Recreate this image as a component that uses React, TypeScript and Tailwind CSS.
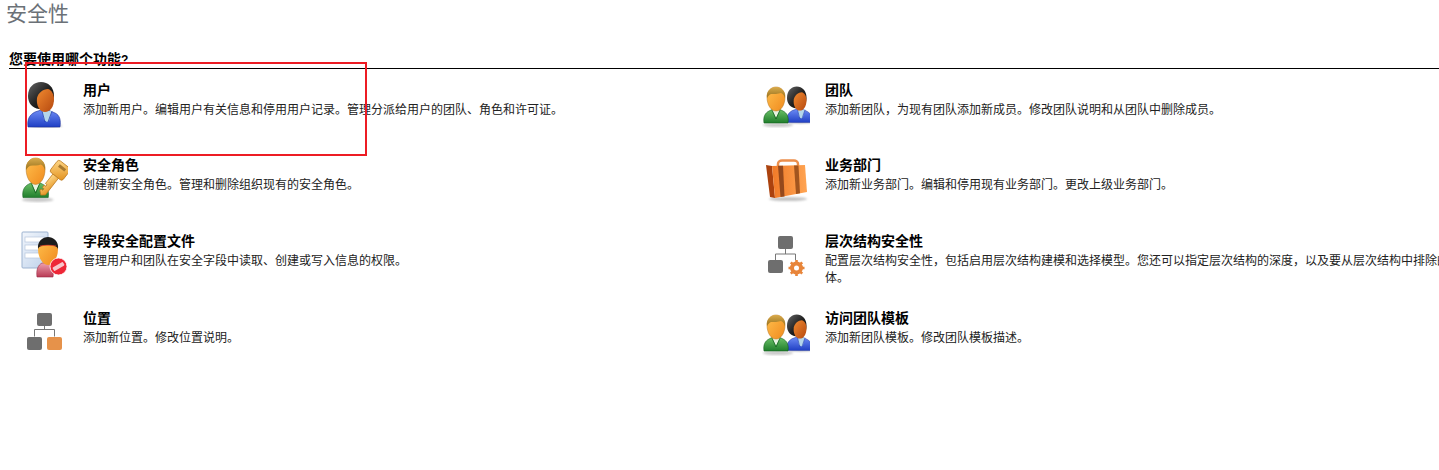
import type { ReactNode } from 'react'

const Defs = () => (
  <svg className="absolute w-0 h-0" aria-hidden="true">
    <defs>
      <linearGradient id="skinLight" x1="0" y1="0" x2="1" y2="1">
        <stop offset="0" stopColor="#ffc04d" />
        <stop offset="1" stopColor="#f08a1e" />
      </linearGradient>
      <linearGradient id="skinDark" x1="0" y1="0" x2="1" y2="1">
        <stop offset="0" stopColor="#f08a30" />
        <stop offset="1" stopColor="#b5480f" />
      </linearGradient>
      <linearGradient id="hairBlond" x1="0" y1="0" x2="0" y2="1">
        <stop offset="0" stopColor="#d9ab4c" />
        <stop offset="1" stopColor="#96701c" />
      </linearGradient>
      <linearGradient id="hairBlack" x1="0" y1="0" x2="1" y2="1">
        <stop offset="0" stopColor="#666" />
        <stop offset="0.5" stopColor="#222" />
        <stop offset="1" stopColor="#000" />
      </linearGradient>
      <linearGradient id="bodyGreen" x1="0" y1="0" x2="0" y2="1">
        <stop offset="0" stopColor="#6fc46a" />
        <stop offset="1" stopColor="#1f7d2b" />
      </linearGradient>
      <linearGradient id="bodyBlue" x1="0" y1="0" x2="0" y2="1">
        <stop offset="0" stopColor="#6d8cf5" />
        <stop offset="1" stopColor="#1f3fc4" />
      </linearGradient>
      <linearGradient id="bodyPink" x1="0" y1="0" x2="0" y2="1">
        <stop offset="0" stopColor="#eda0ad" />
        <stop offset="1" stopColor="#b93a55" />
      </linearGradient>
      <linearGradient id="keyGold" x1="0" y1="0" x2="1" y2="1">
        <stop offset="0" stopColor="#ffd98a" />
        <stop offset="1" stopColor="#e2901c" />
      </linearGradient>
      <linearGradient id="caseFront" x1="0" y1="0" x2="1" y2="0">
        <stop offset="0" stopColor="#f07a28" />
        <stop offset="1" stopColor="#ffa452" />
      </linearGradient>
      <linearGradient id="pageBlue" x1="0" y1="0" x2="1" y2="1">
        <stop offset="0" stopColor="#f2f6fc" />
        <stop offset="1" stopColor="#bcd0ea" />
      </linearGradient>
      <filter id="soft" x="-30%" y="-30%" width="160%" height="160%">
        <feGaussianBlur stdDeviation="1.2" />
      </filter>
    </defs>
  </svg>
)

const Icon = ({ children }: { children: ReactNode }) => (
  <svg width="48" height="48" viewBox="0 0 48 48" className="shrink-0">
    {children}
  </svg>
)

// woman with black hair and blue jacket, drawn in the 48 box of the user icon
const Woman = () => (
  <g>
    <ellipse cx="26" cy="46" rx="16" ry="2" fill="#777" opacity="0.45" filter="url(#soft)" />
    <path d="M8 47c-1-7 1-12 7-15l6-2h7l7 3c5 2 6 8 5 14z" fill="url(#bodyBlue)" stroke="#1b2f9a" strokeWidth="0.6" />
    <path d="M22 31h10l-3 10-2 1-3-2z" fill="#b4d6ea" />
    <path d="M22 31l3 11M32 31l-4 11" stroke="#2340b0" strokeWidth="0.8" fill="none" />
    <path d="M8 16C8 7 14 2 21 2s13 5 13 14c0 7-3 12-7 14l-8-1C12 28 8 23 8 16z" fill="url(#hairBlack)" />
    <path d="M17 18c1-5 6-9 11-9 4 1 6 6 6 10 0 8-4 13-9 13-5 0-9-6-8-14z" fill="url(#skinDark)" />
  </g>
)

// man with blond hair and green shirt, head 18 wide and body 24 wide
const Man = () => (
  <g>
    <ellipse cx="14" cy="38" rx="15" ry="2" fill="#777" opacity="0.4" filter="url(#soft)" />
    <path d="M0 36c-1-6 1-10 5-12l4-2h6l4 2c4 2 6 6 5 12z" fill="url(#bodyGreen)" stroke="#156320" strokeWidth="0.6" />
    <path d="M8 23h8l-4 8z" fill="#e8f3e2" />
    <path d="M8 23l4 9 4-9" stroke="#156320" strokeWidth="0.8" fill="none" />
    <path d="M3 10C3 4 7 0 12 0s9 4 9 10c0 8-4 14-9 14S3 18 3 10z" fill="url(#skinLight)" stroke="#b5741c" strokeWidth="0.5" />
    <path d="M3 11C2 4 7 0 12 0s10 4 9 11c-1-3-2-4-4-5-3 1-7 1-10 1-2 1-3 2-4 4z" fill="url(#hairBlond)" />
  </g>
)

const UserIcon = () => (
  <Icon>
    <Woman />
  </Icon>
)

const TeamIcon = () => (
  <Icon>
    <g transform="translate(19 5) scale(0.75 0.8)">
      <Woman />
    </g>
    <g transform="translate(2 7)">
      <Man />
    </g>
  </Icon>
)

const RoleIcon = () => (
  <Icon>
    <g transform="translate(3 3) scale(1.05 1.1)">
      <Man />
    </g>
    <g transform="rotate(38 35 22)">
      <rect x="27" y="6" width="16" height="15" rx="2.5" fill="url(#keyGold)" stroke="#b9761a" strokeWidth="0.7" />
      <rect x="31" y="9" width="8" height="3" fill="#a87a30" />
      <path d="M31.500 21h7v21l-3.500 3-3.500-3v-2h2v-2h-2v-3h2v-2h-2z" fill="url(#keyGold)" stroke="#b9761a" strokeWidth="0.7" />
    </g>
  </Icon>
)

const FieldIcon = () => (
  <Icon>
    <rect x="2" y="1" width="26" height="36" rx="1" fill="url(#pageBlue)" stroke="#9db3d0" strokeWidth="1" />
    <rect x="5" y="6" width="19" height="5" fill="#fff" stroke="#b7c7dd" strokeWidth="0.7" />
    <rect x="5" y="14" width="19" height="5" fill="#fff" stroke="#b7c7dd" strokeWidth="0.7" />
    <rect x="5" y="22" width="19" height="5" fill="#fff" stroke="#b7c7dd" strokeWidth="0.7" />
    <path d="M17 46c-1-7 1-12 5-14h6c5 2 6 7 5 14z" fill="url(#bodyPink)" stroke="#9c2a44" strokeWidth="0.6" />
    <path d="M18 18c0-7 5-11 10-11s10 4 10 11c0 9-5 16-10 16s-10-7-10-16z" fill="url(#skinLight)" />
    <path d="M18 18c-1-8 5-12 10-12s11 4 10 12c-1-3-5-4-10-4s-9 1-10 4z" fill="#1c1c1c" />
    <path d="M20 15c5-1 11-1 16 0" stroke="#d23b2a" strokeWidth="0.8" fill="none" />
    <circle cx="38.500" cy="35.500" r="8.500" fill="#ee2737" stroke="#fff" strokeWidth="0.8" />
    <rect x="32.500" y="33.500" width="12" height="4" rx="1" transform="rotate(-30 38.500 35.500)" fill="#f7c6cb" />
  </Icon>
)

const CaseIcon = () => (
  <Icon>
    <ellipse cx="26" cy="44" rx="19" ry="2" fill="#777" opacity="0.45" filter="url(#soft)" />
    <path d="M16 11V9c0-2 2-3.500 4-3.500h12c2 0 4 1.500 4 3.500v2" fill="none" stroke="#ec8f4c" strokeWidth="2.500" />
    <path d="M4 10l6 1 3 32-5-1z" fill="#ab420e" />
    <path d="M10 11l33-1 2 27-32 6z" fill="url(#caseFront)" />
    <path d="M16 10.800h5l1.500 30.600-4 .7z" fill="#94481c" />
    <path d="M32 10.400h4.500l1.500 27.900-4 .8z" fill="#a2551f" />
  </Icon>
)

const LocationIcon = () => (
  <Icon>
    <rect x="17" y="5" width="15" height="13" rx="2" fill="#6e6e6e" />
    <path d="M24.500 18v4M14.500 21.500h20M14.500 21.500v7M34.500 21.500v7" stroke="#777" strokeWidth="1" fill="none" />
    <rect x="7" y="29" width="15" height="13" rx="2" fill="#6e6e6e" />
    <rect x="27" y="29" width="15" height="13" rx="2" fill="#e6924a" />
  </Icon>
)

const HierarchyIcon = () => (
  <Icon>
    <rect x="16" y="5" width="15" height="13" rx="2" fill="#6e6e6e" />
    <path d="M23.500 18v5M13.500 23h20M13.500 23v6M33.500 23v6" stroke="#777" strokeWidth="1" fill="none" />
    <rect x="6" y="29" width="15" height="13" rx="2" fill="#6e6e6e" />
    <circle cx="34.500" cy="37" r="4.500" fill="none" stroke="#e8853a" strokeWidth="4" />
    <path
      d="M34.500 29v3M34.500 42v3M26.500 37h3M39.500 37h3M28.800 31.300l2.100 2.100M38.100 40.600l2.100 2.100M28.800 42.700l2.100-2.100M38.100 33.400l2.100-2.100"
      stroke="#e8853a"
      strokeWidth="2.600"
    />
  </Icon>
)

const items = [
  { icon: <UserIcon />, title: '用户', desc: '添加新用户。编辑用户有关信息和停用用户记录。管理分派给用户的团队、角色和许可证。' },
  { icon: <TeamIcon />, title: '团队', desc: '添加新团队，为现有团队添加新成员。修改团队说明和从团队中删除成员。' },
  { icon: <RoleIcon />, title: '安全角色', desc: '创建新安全角色。管理和删除组织现有的安全角色。' },
  { icon: <CaseIcon />, title: '业务部门', desc: '添加新业务部门。编辑和停用现有业务部门。更改上级业务部门。' },
  { icon: <FieldIcon />, title: '字段安全配置文件', desc: '管理用户和团队在安全字段中读取、创建或写入信息的权限。' },
  {
    icon: <HierarchyIcon />,
    title: '层次结构安全性',
    desc: '配置层次结构安全性，包括启用层次结构建模和选择模型。您还可以指定层次结构的深度，以及要从层次结构中排除的实体。',
  },
  { icon: <LocationIcon />, title: '位置', desc: '添加新位置。修改位置说明。' },
  { icon: <TeamIcon />, title: '访问团队模板', desc: '添加新团队模板。修改团队模板描述。' },
]

export default function App() {
  return (
    <div className="relative w-[1439px] h-[470px] overflow-hidden bg-white font-['Liberation_Sans','Noto_Sans_CJK_SC',sans-serif]">
      <Defs />
      <h1 className="h-[28px] pl-[6px] text-[21px] leading-[28px] font-normal text-[#6b7177]">安全性</h1>
      <div className="mt-[21px] ml-[9px] h-[20px] border-b border-black text-[14px] leading-[21px] font-bold text-black">
        您要使用哪个功能<span className="text-[12px]">?</span>
      </div>
      <div className="mt-[11px] ml-[20px] grid grid-cols-[742px_1fr] grid-rows-[75px_76px_77px_auto]">
        {items.map((item) => (
          <div key={item.title} className="flex gap-[15px] items-start">
            {item.icon}
            <div className="w-[640px] shrink-0">
              <div className="h-[20px] text-[14px] leading-[20px] font-bold text-black">{item.title}</div>
              <p className="text-[12px] leading-[17px] mt-[2px] text-[#222]">{item.desc}</p>
            </div>
          </div>
        ))}
      </div>
      <div className="absolute left-[25px] top-[62px] w-[342px] h-[94px] border-2 border-[#ed1c24]" />
    </div>
  )
}
